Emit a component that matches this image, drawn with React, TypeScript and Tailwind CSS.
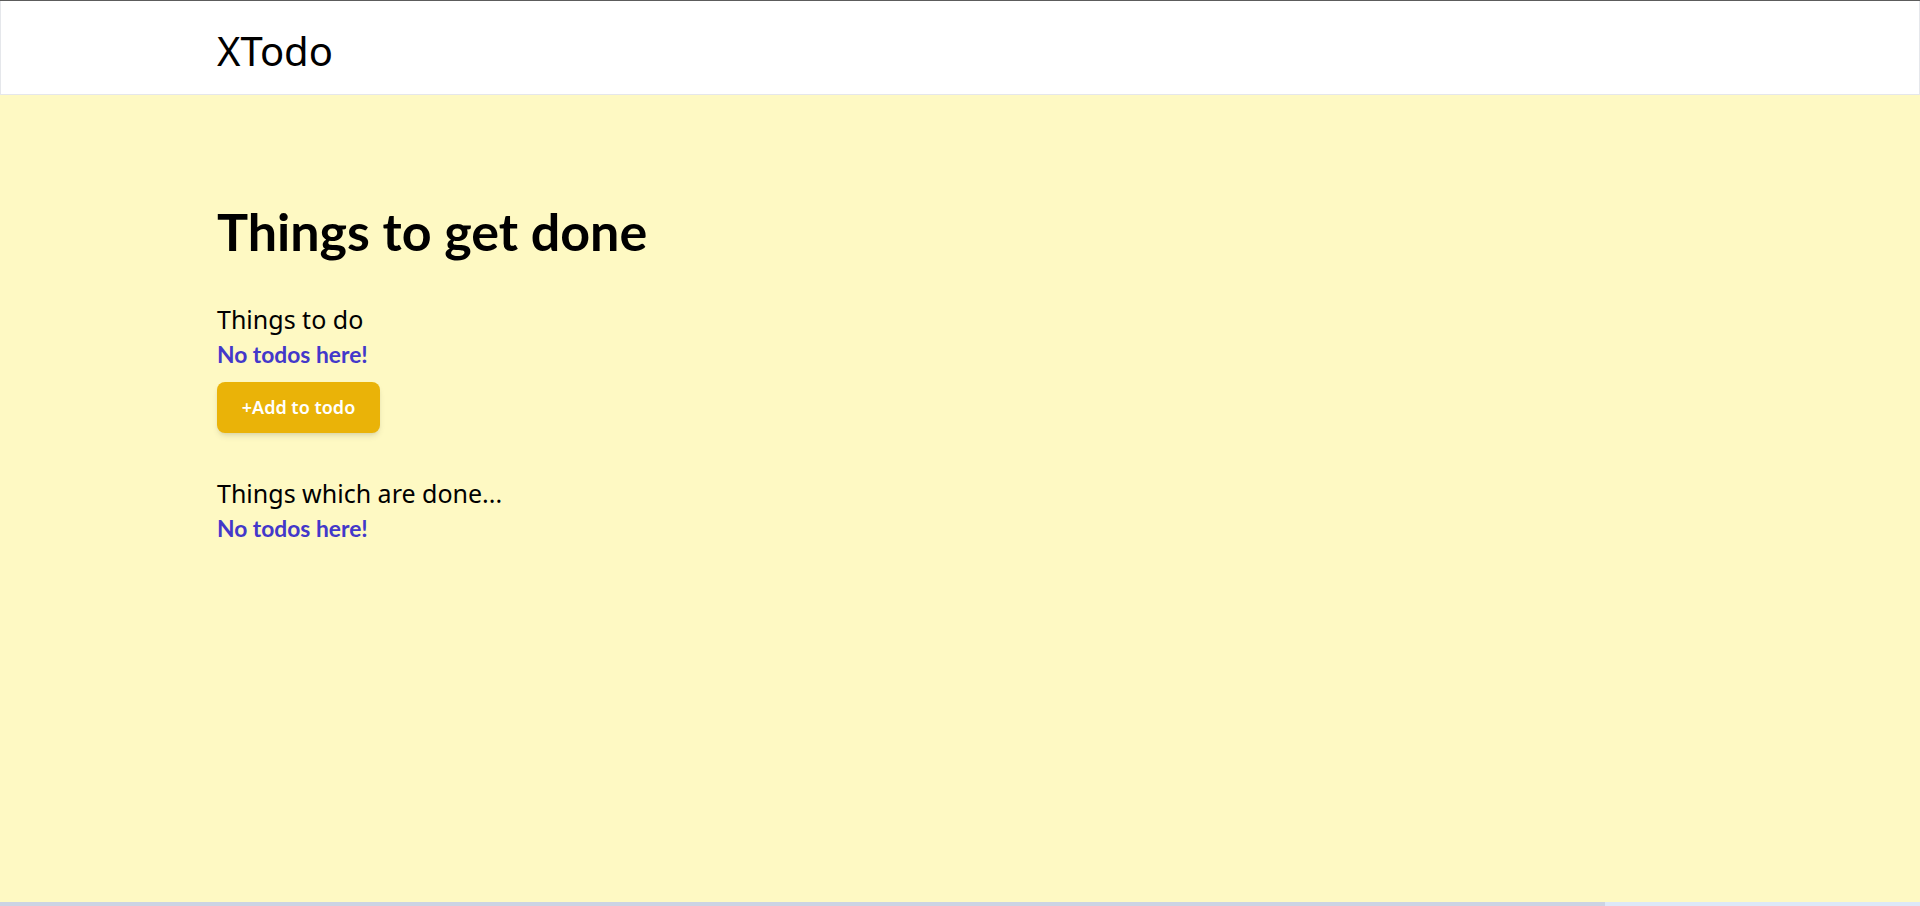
export default function App() {
  return (
    <div className="flex h-[906px] w-full flex-col overflow-hidden bg-[#fef9c3] font-['Noto_Sans',sans-serif]">
      {/* header */}
      <div className="h-px shrink-0 bg-[#5c5c5c]" />
      <header className="flex h-[94px] shrink-0 items-center border-x border-b border-[#e5e7eb] bg-white pl-[216px] pt-[6px]">
        <h1 className="text-[40px] leading-[48px] text-black">XTodo</h1>
      </header>

      {/* content */}
      <main className="flex flex-1 flex-col items-start pl-[217px] pt-[104px]">
        <h2 className="font-['Lato',sans-serif] text-[52px] font-bold leading-[64px] text-black">
          Things to get done
        </h2>

        <h3 className="mt-[39px] text-[25px] leading-[34px] text-black">
          Things to do
        </h3>
        <p className="mt-[5px] font-['Lato',sans-serif] text-[22.8px] font-bold leading-[27px] text-[#4338ca]">
          No todos here!
        </p>
        <button
          type="button"
          className="mt-[14px] flex h-[51px] w-[163px] items-center justify-center rounded-lg bg-[#eab308] text-[18px] font-semibold text-white shadow-md"
        >
          +Add to todo
        </button>

        <h3 className="mt-[43px] text-[25px] leading-[34px] text-black">
          Things which are done...
        </h3>
        <p className="mt-[5px] font-['Lato',sans-serif] text-[22.8px] font-bold leading-[27px] text-[#4338ca]">
          No todos here!
        </p>
      </main>

      {/* scrollbar strip */}
      <div className="flex h-1 shrink-0 bg-[#dde8f8]">
        <div className="w-[1605px] bg-[#ccd3e4]" />
      </div>
    </div>
  );
}
